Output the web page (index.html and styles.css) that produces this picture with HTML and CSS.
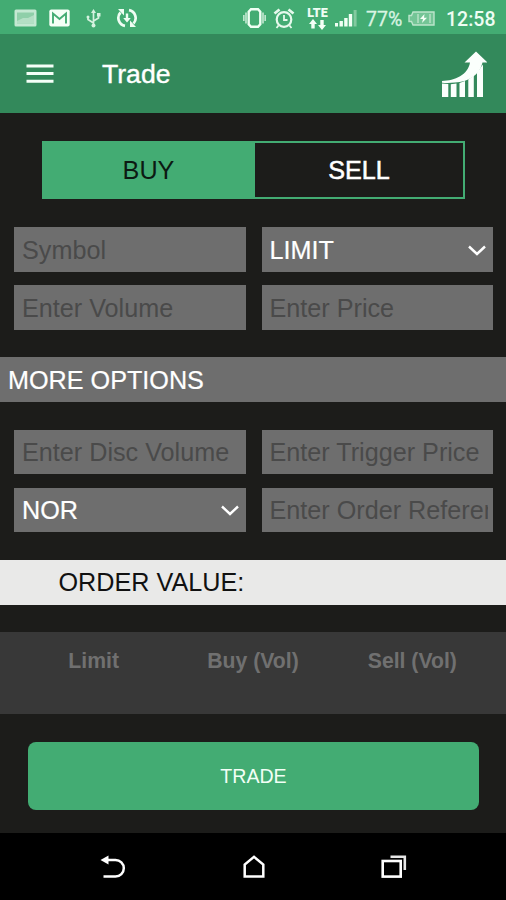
FILE: index.html
```html
<!DOCTYPE html>
<html lang="en">
  <head>
    <meta charset="UTF-8" />
    <meta name="viewport" content="width=device-width, initial-scale=1.0" />
    <title>Trade</title>
    <link rel="stylesheet" href="styles.css">
  </head>
  <body>
    <div class="status">
      <svg class="i-card" width="23" height="18" viewBox="0 0 23 18">
        <rect x="0.5" y="0.5" width="22" height="17" rx="1.5" fill="#c4e8d2" />
        <rect x="3" y="3.5" width="17" height="11" fill="#8fcfa9" />
        <path d="M3 12L9 9L14 9L20 6V14.500H3z" fill="#b4dfc5" />
      </svg>
      <svg class="i-mail" width="21" height="18" viewBox="0 0 21 18">
        <rect x="0.300" y="0.500" width="20.400" height="17" rx="2" fill="#f4fff6" />
        <path d="M4 14.500V4.500L10.500 10L17 4.500V14.500" fill="none" stroke="#43ac73" stroke-width="1.900" />
      </svg>
      <svg class="i-usb" width="15" height="19" viewBox="0 0 15 19" fill="none" stroke="#d5f2df" stroke-width="1.700">
        <path d="M7.500 16V3M7.500 14L2 10.500V7.500M7.500 12L12.500 9V6" />
        <path d="M5 4L7.500 0L10 4z" fill="#d5f2df" stroke="none" />
        <circle cx="7.500" cy="16.500" r="2" fill="#d5f2df" stroke="none" />
        <circle cx="2" cy="8" r="1.500" fill="#d5f2df" stroke="none" />
        <rect x="11" y="4" width="3.500" height="3.500" fill="#d5f2df" stroke="none" />
      </svg>
      <svg class="i-sync" width="22" height="20" viewBox="0 0 22 20">
        <g fill="none" stroke="#effdf3" stroke-width="2.700">
          <path d="M9 17.800A8 8 0 0 1 4.500 4.500" />
          <path d="M13 2.200A8 8 0 0 1 17.500 15.500" />
        </g>
        <path d="M2 1H8V7.500zM20 19H14V12.500z" fill="#effdf3" />
        <path d="M9.800 5.500H12.200V10H14.800L11 14.500L7.200 10H9.800z" fill="#effdf3" />
      </svg>
      <div class="space"></div>
      <svg class="i-vibrate" width="23" height="20" viewBox="0 0 23 20">
        <path d="M8 1.200H15L17.300 3.800V16.200L15 18.800H8L5.700 16.200V3.800z" fill="none" stroke="#f0fff4" stroke-width="2.400" />
        <path d="M3 4.500V15.500M20 4.500V15.500M0.800 7V13M22.200 7V13" stroke="#bfe6ce" stroke-width="1.700" />
      </svg>
      <svg class="i-alarm" width="22" height="21" viewBox="0 0 22 21" fill="none" stroke="#e6f9ec">
        <circle cx="11" cy="11.500" r="7.300" stroke-width="2.200" />
        <path d="M1.500 5.500L6.500 1.500M20.500 5.500L15.500 1.500" stroke-width="2.800" />
        <path d="M11 7V12H14.500M5.500 17.500L3.500 20M16.500 17.500L18.500 20" stroke-width="1.800" />
      </svg>
      <div class="lte">
        <span>LTE</span>
        <svg width="17" height="11" viewBox="0 0 17 11" fill="#f4fff6">
          <path d="M4 0L8 5H5.700V9.500H2.300V5H0zM11.300 1H14.700V6H17L13 11L9 6H11.300z" />
        </svg>
      </div>
      <svg class="i-signal" width="22" height="18" viewBox="0 0 22 18">
        <path d="M0 14H3V17.500H0zM4.500 12H7.900V17.500H4.500zM9.200 9H12.600V17.500H9.200zM13.800 5H17.200V17.500H13.800z" fill="#f0fff4" />
        <path d="M18.600 1H21.600V17.500H18.600z" fill="#82c99f" />
      </svg>
      <span class="percent">77%</span>
      <svg class="i-battery" width="27" height="15" viewBox="0 0 27 15">
        <path d="M5 1H26V14H5L3.500 10.500H1V4.500H3.500z" fill="#74c596" stroke="#bde5cc" stroke-width="1.400" />
        <path d="M10 3V12M22 3V12" stroke="#a5dab9" stroke-width="2" />
        <path d="M16.500 3L12 8H15L14 12L19 6.800H16z" fill="#f4fff6" />
      </svg>
      <span class="clock">12:58</span>
    </div>

    <div class="header">
      <svg class="menu" width="28" height="20" viewBox="0 0 28 20">
        <path d="M0.500 2H27.500M0.500 9.500H27.500M0.500 17.200H27.500" stroke="#f5fff8" stroke-width="3" />
      </svg>
      <h1 class="title">Trade</h1>
      <svg class="chart" width="46" height="48" viewBox="0 0 46 48" fill="#fbfffc">
        <path d="M1 31C14 30.500 27 25 29 12.500H23.500L35 1.500L46.500 12.500H41.500C39 25 27 32 14 32.600C9 33 5 33 1 32.700z" />
        <path d="M1 33.500L7.300 34V47H1zM9.800 34.200L15.500 33.500V47H9.800zM18.500 33L24 31V47H18.500zM27.300 29.500L32.800 25.500V47H27.300zM36 22.500L42 14.500V47H36z" />
      </svg>
    </div>

    <div class="content">
      <div class="toggle">
        <div class="side active">BUY</div>
        <div class="side">SELL</div>
      </div>

      <div class="fields">
        <input class="field" type="text" placeholder="Symbol">
        <div class="field select">LIMIT
          <svg width="18" height="11" viewBox="0 0 18 11"><path d="M1 1.500L9 9L17 1.500" fill="none" stroke="#fff" stroke-width="2.400" /></svg>
        </div>
        <input class="field" type="text" placeholder="Enter Volume">
        <input class="field" type="text" placeholder="Enter Price">
      </div>

      <div class="bar">MORE OPTIONS</div>

      <div class="fields">
        <input class="field" type="text" placeholder="Enter Disc Volume">
        <input class="field" type="text" placeholder="Enter Trigger Price">
        <div class="field select">NOR
          <svg width="18" height="11" viewBox="0 0 18 11"><path d="M1 1.500L9 9L17 1.500" fill="none" stroke="#fff" stroke-width="2.400" /></svg>
        </div>
        <input class="field" type="text" placeholder="Enter Order Reference">
      </div>

      <div class="bar order">ORDER VALUE:</div>

      <div class="depth">
        <div>Limit</div>
        <div>Buy (Vol)</div>
        <div>Sell (Vol)</div>
      </div>

      <button class="trade">TRADE</button>
    </div>

    <div class="nav">
      <svg width="26" height="24" viewBox="0 0 26 24">
        <path d="M7 5H15.500A8.300 8.300 0 0 1 15.500 21.600H3.500" fill="none" stroke="#fff" stroke-width="2.500" />
        <path d="M0.500 5L8.500 0.500V9.500z" fill="#fff" />
      </svg>
      <svg width="26" height="24" viewBox="0 0 26 24">
        <path d="M3.700 21.600V9.500L13 1.800L22.300 9.500V21.600z" fill="none" stroke="#fff" stroke-width="2.500" />
      </svg>
      <svg width="26" height="24" viewBox="0 0 26 24" fill="none">
        <path d="M9.500 1.700H23.800V15" stroke="#e6e6e6" stroke-width="2.600" />
        <rect x="1.700" y="6" width="18" height="15.600" stroke="#fff" stroke-width="2.600" />
      </svg>
    </div>
  </body>
</html>
```

FILE: styles.css
```css
* {
  box-sizing: border-box;
}
body {
  margin: 0;
  height: 900px;
  display: flex;
  flex-direction: column;
  background-color: #1c1c1a;
  font-family: "Liberation Sans", Arial, sans-serif;
  font-size: 25.2px;
  color: white;
  overflow: hidden;
}
svg {
  display: block;
  flex: none;
}
.status {
  height: 34px;
  padding: 2px 11px 0 14px;
  display: flex;
  align-items: center;
  background-color: #43ac73;
  font-family: Roboto, sans-serif;
  font-size: 19.5px;
  color: #effdf3;
}
.i-mail {
  margin-left: 12px;
}
.i-usb {
  margin-left: 16px;
}
.i-sync {
  margin-left: 15px;
}
.space {
  flex: 1;
}
.i-alarm {
  margin-left: 7px;
}
.lte {
  width: 21px;
  margin-left: 12px;
  display: flex;
  flex-direction: column;
  align-items: center;
  font-size: 12.5px;
  font-weight: 900;
  line-height: 12px;
}
.i-signal {
  margin-left: 7px;
}
.percent {
  width: 37px;
  margin: 2px 0 0 9px;
  color: #d9f4e2;
  -webkit-text-stroke: 0.3px;
}
.i-battery {
  margin-left: 5px;
}
.clock {
  width: 49px;
  margin: 2px 0 0 11px;
  font-weight: 500;
}
.header {
  height: 79px;
  padding: 0 19px 0 26px;
  display: flex;
  align-items: center;
  background-color: #33895b;
}
.title {
  flex: 1;
  margin: 2px 0 0 48px;
  font-size: 26.6px;
  font-weight: normal;
  -webkit-text-stroke: 0.4px;
}
.content {
  flex: 1;
  padding-top: 28px;
}
.toggle {
  width: 423px;
  height: 58px;
  margin: 0 0 28px 42px;
  display: flex;
  border: 2px solid #43ac73;
}
.side {
  flex: 1;
  display: flex;
  align-items: center;
  justify-content: center;
  -webkit-text-stroke: 0.5px;
}
.active {
  flex: 0 0 211px;
  padding-right: 2px;
  background-color: #43ac73;
  color: #0c1a12;
  -webkit-text-stroke: 0;
}
.fields {
  padding: 0 13px 0 14px;
  display: grid;
  grid-template-columns: 1fr 1fr;
  grid-auto-rows: 44.5px;
  gap: 13.5px 16px;
}
.field {
  width: 100%;
  height: 100%;
  padding: 2px 5px 0 8px;
  border: 0;
  border-radius: 0;
  background-color: #6e6e6e;
  color: white;
  font: inherit;
}
.field::placeholder {
  color: #4a4a4a;
}
.select {
  display: flex;
  align-items: center;
  justify-content: space-between;
  padding-right: 7px;
  -webkit-text-stroke: 0.2px;
}
.bar {
  height: 45px;
  margin: 27.5px 0;
  padding-left: 8px;
  line-height: 47px;
  background-color: #6e6e6e;
  -webkit-text-stroke: 0.2px;
}
.order {
  padding-left: 58.5px;
  line-height: 45px;
  background-color: #e9e9e8;
  color: #111;
  -webkit-text-stroke: 0;
}
.depth {
  height: 82px;
  padding: 17px 14px 0;
  display: grid;
  grid-template-columns: 1fr 1fr 1fr;
  background-color: #383838;
  color: #707070;
  font-size: 21.2px;
  font-weight: bold;
  text-align: center;
}
.trade {
  display: block;
  width: 451px;
  height: 68px;
  margin: 28px 0 0 28px;
  border: 0;
  border-radius: 8px;
  background-color: #43ac73;
  color: #f2fff6;
  font: inherit;
  font-size: 19.6px;
}
.nav {
  height: 67px;
  padding: 0 99px 0 100px;
  display: flex;
  align-items: center;
  justify-content: space-between;
  background-color: black;
}
```
